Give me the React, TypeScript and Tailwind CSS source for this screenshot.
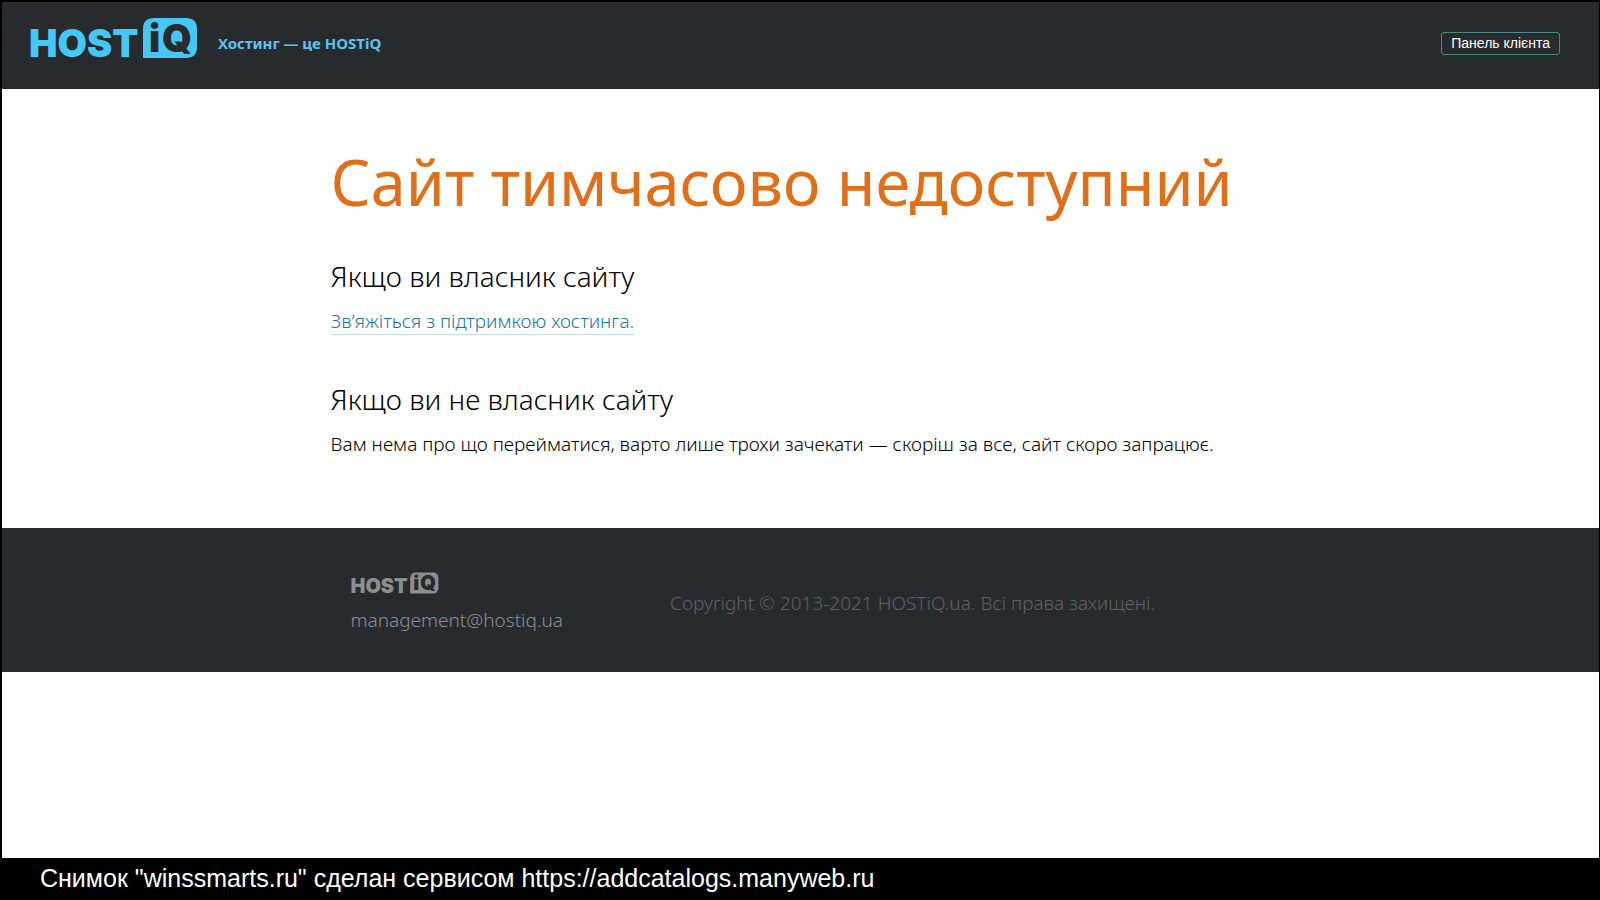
type LogoProps = { className: string };

function Logo({ className }: LogoProps) {
  return (
    <svg viewBox="0 0 168 40" className={className} role="img" aria-label="HOSTiQ">
      <g fontFamily="Inter, 'Liberation Sans', sans-serif" fontWeight="900" fontSize="38">
        <text x="-1" y="39" fill="currentColor">
          HOST
        </text>
        <path
          d="M113 40V11Q113 0 124 0H156Q167 0 167 11V29Q167 40 156 40Z"
          fill="currentColor"
        />
        <text x="119" y="34" fill="#282b2e">
          i
        </text>
        <text x="132" y="34" fill="#282b2e">
          Q
        </text>
      </g>
    </svg>
  );
}

export default function App() {
  return (
    <div className="flex min-h-screen flex-col bg-black font-['Noto_Sans','Open_Sans',sans-serif]">
      <div className="flex grow flex-col border-t-2 border-r border-l-2 border-black bg-white">
        <header className="flex items-start justify-between bg-[#282b2e] pt-4 pr-[39px] pb-[31px] pl-7 text-[#44c8f5]">
          <a href="#home" className="flex items-center gap-5">
            <Logo className="h-10 w-[168px] overflow-visible" />
            <span className="pt-2.5 text-[15px] leading-7 font-bold text-[#5bc3f0]">Хостинг — це HOSTiQ</span>
          </a>
          <a
            href="#panel"
            className="mt-[14px] rounded-[3px] border border-[#4b8a7c] px-[9px] font-['Liberation_Sans',sans-serif] text-sm leading-[21px] text-white"
          >
            Панель клієнта
          </a>
        </header>

        <main className="mx-auto w-full max-w-[940px] pt-[47px] pb-[70px] text-black">
          <h1 className="text-[63px] leading-[91px] text-[#e06f17]">Сайт тимчасово недоступний</h1>
          <section className="pt-[31px]">
            <h2 className="text-[28px] leading-9 font-light">Якщо ви власник сайту</h2>
            <p className="pt-[13px] text-[19px] leading-7 font-light">
              <a href="#support" className="border-b border-[#bfdde8] text-[#1c7797]">
                Зв’яжіться з підтримкою хостинга.
              </a>
            </p>
          </section>
          <section className="pt-[46px]">
            <h2 className="text-[28px] leading-9 font-light">Якщо ви не власник сайту</h2>
            <p className="pt-[13px] text-[19px] leading-7 font-light">
              Вам нема про що перейматися, варто лише трохи зачекати — скоріш за все, сайт скоро запрацює.
            </p>
          </section>
        </main>

        <footer className="bg-[#282b2e]">
          <div className="mx-auto flex w-full max-w-[940px] items-center gap-[107px] px-5 pt-11 pb-[38px] text-[19px] font-light">
            <div className="text-[#8b8e90]">
              <Logo className="h-[22px] w-[88px] overflow-visible" />
              <a href="mailto:management@hostiq.ua" className="block pt-3 leading-7">
                management@hostiq.ua
              </a>
            </div>
            <p className="leading-7 text-[#5d6063]">Copyright © 2013-2021 HOSTiQ.ua. Всі права захищені.</p>
          </div>
        </footer>
      </div>
      <p className="bg-black px-10 pb-0.5 font-['Liberation_Sans',sans-serif] text-[25px] leading-10 text-white">
        Снимок "winssmarts.ru" сделан сервисом https://addcatalogs.manyweb.ru
      </p>
    </div>
  );
}
